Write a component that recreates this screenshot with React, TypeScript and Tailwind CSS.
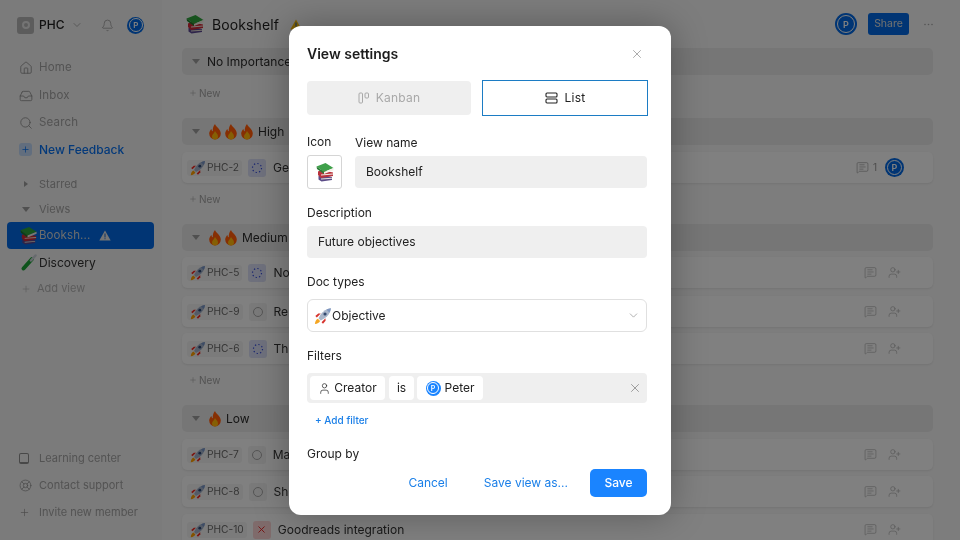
import { Bell, ChevronDown, Home, Inbox, LifeBuoy, MessageSquareText, Plus, Search, UserPlus, User, X } from 'lucide-react';

// Emoji drawings, no colour emoji font to rely on
function Books({ size = 20 }: { size?: number }) {
  return (
    <svg width={size} height={size} viewBox="0 0 20 20" className="shrink-0">
      {/* bottom book */}
      <path d="M3.500 14 5 12.500l12 2.500v3L6.500 19.500 3.500 17.500z" fill="#5a4a86" />
      <path d="M6 16.500 17 15.800v.9L6 17.500z" fill="#e6e0d6" />
      {/* middle book */}
      <path d="M3 9.500 6 8l12 2.500v3.500L6 16 3 13z" fill="#b8323c" />
      <path d="M6 12.500 18 11.500v1L6 13.500z" fill="#f0ebe2" />
      {/* top book */}
      <path d="M1.500 4.500 10.500 1 18.500 6 9 10z" fill="#3fa04a" />
      <path d="M1.500 4.500 9 10v2L2 7z" fill="#2a7a35" />
      <path d="M9 10 18.500 6v2.200L9 12z" fill="#f4f1ea" />
    </svg>
  );
}

function Rocket({ size = 16 }: { size?: number }) {
  return (
    <svg width={size} height={size} viewBox="0 0 16 16" className="shrink-0">
      <path d="M.8 15.200c.2-2.500 1-3.900 2.600-4.700l2 2c-.8 1.600-2.200 2.500-4.600 2.700z" fill="#f5a623" />
      <path d="M2.500 9.300 6 5.800 3.800 5.700 1.200 8z" fill="#d6322c" />
      <path d="M6.700 13.500 10.200 10l.1 2.200L8 14.800z" fill="#d6322c" />
      <path d="M4 10 6 6.500C8 3.500 11 1.500 15 1c-.5 4-2.500 7-5.500 9L6 12z" fill="#a9b5c9" />
      <path d="M15 1c-1.500.2-2.800.6-4 1.200L13.800 5c.6-1.200 1-2.500 1.200-4z" fill="#7f97c0" />
      <circle cx="9.800" cy="6.200" r="1.400" fill="#33496e" />
    </svg>
  );
}

function Fire() {
  return (
    <svg width="14" height="16" viewBox="0 0 14 16" className="shrink-0">
      <path d="M7 0c.6 2.600 5.800 5 5.800 9.600A5.800 6 0 0 1 1.200 9.600C1.200 7.500 2.400 6 3.500 5c0 1.300.5 2 1.300 2.300C4.500 4.500 5.500 2 7 0z" fill="#f0641e" />
      <path d="M7 7c.4 1.500 3 2.800 3 5.200a3 3.200 0 0 1-6 0C4 10.500 6 9.500 7 7z" fill="#fbbf2e" />
    </svg>
  );
}

function TestTube() {
  return (
    <svg width="18" height="18" viewBox="0 0 18 18" className="shrink-0">
      <path d="M12 5 3.500 14.500" stroke="#2f9e44" strokeWidth="4" strokeLinecap="round" />
      <path d="M15.500 1.500 11 6.500" stroke="#cfd4da" strokeWidth="2.500" strokeLinecap="round" />
    </svg>
  );
}

function Warn({ className, color }: { className?: string; color: string }) {
  return (
    <svg width="12" height="11" viewBox="0 0 12 11" className={className}>
      <path d="M6 .5 11.700 10.500H.3z" fill={color} />
      <path d="M5.500 3.500h1v4h-1zM5.500 8.200h1v1h-1z" fill="#1f5fb0" />
    </svg>
  );
}

function Avatar({ size, text, color = '#1468cc' }: { size: number; text: string; color?: string }) {
  return (
    <div
      className="flex shrink-0 items-center justify-center rounded-full"
      style={{ width: size, height: size, backgroundColor: color }}
    >
      <div className="flex h-[80%] w-[80%] items-center justify-center rounded-full border border-white font-semibold leading-none text-white" style={{ fontSize: text }}>
        P
      </div>
    </div>
  );
}

function Caret({ open }: { open: boolean }) {
  return open ? (
    <div className="h-0 w-0 border-x-[4px] border-t-[5px] border-x-transparent border-t-[#a0a0a0]" />
  ) : (
    <div className="h-0 w-0 border-y-[3.5px] border-l-[4px] border-y-transparent border-l-[#a0a0a0]" />
  );
}

function NavItem({ icon, label, className }: { icon: React.ReactNode; label: string; className?: string }) {
  return (
    <div className={`flex h-[27px] items-center pl-[19px] text-[#a6a6a6] ${className ?? ''}`}>
      <span className="flex w-[20px] shrink-0 items-center text-[#909090]">{icon}</span>
      {label}
    </div>
  );
}

function Sidebar() {
  return (
    <aside className="flex h-full w-[162px] shrink-0 flex-col bg-[#f5f5f5]">
      <div className="flex h-[50px] items-center pl-[17px]">
        <div className="flex h-[17px] w-[17px] items-center justify-center rounded-[3px] bg-[#b8b8b8]">
          <div className="h-[8px] w-[8px] rounded-full border-2 border-[#e8e8e8]" />
        </div>
        <span className="ml-[5px] text-[12px] font-medium text-[#222]">PHC</span>
        <ChevronDown size={12} strokeWidth={1.5} className="ml-[7px] text-[#999]" />
        <Bell size={13} strokeWidth={1.4} className="ml-[18px] text-[#999]" />
        <div className="ml-[13px]"><Avatar size={17} text="8px" /></div>
      </div>
      <div className="mt-[4px] flex flex-col">
        <NavItem icon={<Home size={14} strokeWidth={1.4} />} label="Home" className="text-[11.5px] tracking-[0.2px]" />
        <NavItem icon={<Inbox size={14} strokeWidth={1.4} />} label="Inbox" className="mt-[1px] text-[11.5px] tracking-[0.2px]" />
        <NavItem icon={<Search size={14} strokeWidth={1.4} />} label="Search" className="text-[11.5px] tracking-[0.2px]" />
        <div className="flex h-[27px] items-center pl-[19px] text-[12px] font-medium text-[#1a70d8]">
          <span className="mr-[7px] flex h-[13px] w-[13px] items-center justify-center rounded-[3px] bg-[#c8dcf5]">
            <Plus size={9} />
          </span>
          New Feedback
        </div>
      </div>
      <div className="mt-[8px] flex h-[26px] items-center pl-[24px] text-[11px] text-[#a6a6a6]">
        <span className="flex w-[15px]"><Caret open={false} /></span>
        Starred
      </div>
      <div className="flex h-[25px] items-center pl-[22px] text-[11px] text-[#a6a6a6]">
        <span className="flex w-[17px]"><Caret open /></span>
        Views
      </div>
      <div className="ml-[7px] mr-[8px] flex h-[27px] items-center rounded-[4px] bg-[#1468cc] pl-[12px] text-[11.5px] tracking-[0.1px] text-[#d8d8d8]">
        <Books size={19} />
        <span className="ml-[1px]">Booksh...</span>
        <Warn className="ml-[9px]" color="#e8e8e8" />
      </div>
      <div className="flex h-[27px] items-center pl-[20px] text-[12px] text-[#333]">
        <TestTube />
        <span className="ml-[1px]">Discovery</span>
      </div>
      <div className="mt-[1px] flex h-[23px] items-center pl-[21px] text-[11px] text-[#b5b5b5]">
        <Plus size={10} strokeWidth={1.5} className="mr-[6px]" />
        Add view
      </div>
      <div className="mt-auto mb-[14px] flex flex-col text-[11px]">
        <NavItem icon={<div className="h-[11px] w-[10px] rounded-[2px] border border-b-2 border-[#909090]" />} label="Learning center" />
        <NavItem icon={<LifeBuoy size={13} strokeWidth={1.3} />} label="Contact support" />
        <NavItem icon={<Plus size={11} strokeWidth={1.4} />} label="Invite new member" />
      </div>
    </aside>
  );
}

function GroupHead({ fires, label }: { fires: number; label: string }) {
  return (
    <div className="flex h-[27px] shrink-0 items-center rounded-[5px] bg-[#ebebeb] pl-[10px] text-[12px] text-[#2a2a2a]">
      <Caret open />
      <div className="ml-[8px] flex gap-[2px]">
        {Array.from({ length: fires }).map((_, i) => (
          <Fire key={i} />
        ))}
      </div>
      <span className={fires === 0 ? 'ml-[-1px]' : 'ml-[4px]'}>{label}</span>
    </div>
  );
}

function StatusTile({ kind }: { kind: 'progress' | 'todo' | 'cancel' }) {
  if (kind === 'cancel') {
    return (
      <div className="flex h-[18px] w-[18px] shrink-0 items-center justify-center rounded-[3px] bg-[#f8d7d7] text-[#c92a2a]">
        <X size={11} strokeWidth={2} />
      </div>
    );
  }
  if (kind === 'progress') {
    return (
      <div className="flex h-[18px] w-[18px] shrink-0 items-center justify-center rounded-[3px] bg-[#dfe3f5]">
        <svg width="12" height="12" viewBox="0 0 12 12" fill="none" stroke="#3d4fc4" strokeWidth="1.200" strokeDasharray="1.300 2.200">
          <circle cx="6" cy="6" r="4.500" />
        </svg>
      </div>
    );
  }
  return (
    <div className="flex h-[18px] w-[18px] shrink-0 items-center justify-center rounded-[3px] bg-[#f3f3f3]">
      <div className="h-[10px] w-[10px] rounded-full border border-[#aaa]" />
    </div>
  );
}

function Card({ id, status, text, comments, className }: { id: string; status: 'progress' | 'todo' | 'cancel'; text: string; comments?: string; className?: string }) {
  return (
    <div className={`flex h-[31px] shrink-0 items-center rounded-[5px] bg-white pl-[5px] pr-[29px] shadow-[0_1px_2px_rgba(0,0,0,0.08)] ${className ?? ''}`}>
      <div className="flex h-[16px] items-center rounded-[3px] bg-[#f6f6f6] pl-[3px] pr-[3px] text-[10.2px] text-[#6a6a6a]">
        <Rocket />
        <span className="ml-[1px]">{id}</span>
      </div>
      <div className="ml-[6px]"><StatusTile kind={status} /></div>
      <span className="ml-[7px] text-[12px] text-[#333]">{text}</span>
      {comments ? (
        <div className="ml-auto flex items-center text-[10px] text-[#999]">
          <MessageSquareText size={13} strokeWidth={1.2} />
          <span className="ml-[4px] mr-[8px]">{comments}</span>
          <Avatar size={19} text="9px" />
        </div>
      ) : (
        <div className="ml-auto flex items-center gap-[11px] pr-[3px] text-[#aaa]">
          <MessageSquareText size={13} strokeWidth={1.2} />
          <UserPlus size={13} strokeWidth={1.2} />
        </div>
      )}
    </div>
  );
}

function NewRow({ className }: { className: string }) {
  return (
    <div className={`flex h-[16px] shrink-0 items-center pl-[7px] text-[10px] text-[#a6a6a6] ${className}`}>
      <Plus size={8} strokeWidth={1.6} className="mr-[2px]" />
      New
    </div>
  );
}

function Main() {
  return (
    <main className="flex h-full min-w-0 flex-1 flex-col overflow-hidden bg-[#f9f9f9] pl-[20px] pr-[27px]">
      <div className="flex h-[48px] shrink-0 items-center">
        <div className="ml-[3px] flex items-center">
          <Books size={20} />
          <span className="ml-[7px] text-[14px] tracking-[0.1px] text-[#1e1e1e]">Bookshelf</span>
          <Warn className="ml-[11px]" color="#f5c22e" />
        </div>
        <div className="ml-auto flex items-center">
          <Avatar size={22} text="9px" />
          <div className="ml-[11px] flex h-[22px] w-[41px] items-center justify-center rounded-[3px] bg-[#1468cc] text-[10.500px] text-[#e0e0e0]">Share</div>
          <svg width="9" height="3" viewBox="0 0 9 3" fill="#a8a8a8" className="ml-[15px]">
            <circle cx="1" cy="1.500" r="0.800" />
            <circle cx="4.500" cy="1.500" r="0.800" />
            <circle cx="8" cy="1.500" r="0.800" />
          </svg>
        </div>
      </div>
      <GroupHead fires={0} label="No Importance" />
      <NewRow className="mt-[10px] mb-[17px]" />
      <GroupHead fires={3} label="High" />
      <Card id="PHC-2" status="progress" text="Ge" comments="1" className="mt-[7px]" />
      <NewRow className="mt-[8px] mb-[17px]" />
      <GroupHead fires={2} label="Medium" />
      <Card id="PHC-5" status="progress" text="No" className="mt-[6px]" />
      <Card id="PHC-9" status="todo" text="Re" className="mt-[8px]" />
      <Card id="PHC-6" status="progress" text="Th" className="mt-[6px]" />
      <NewRow className="mt-[8px] mb-[17px]" />
      <GroupHead fires={1} label="Low" />
      <Card id="PHC-7" status="todo" text="Ma" className="mt-[7px]" />
      <Card id="PHC-8" status="todo" text="Sh" className="mt-[6px]" />
      <Card id="PHC-10" status="cancel" text="Goodreads integration" className="mt-[7px]" />
    </main>
  );
}

function Modal() {
  return (
    <div className="mt-[26px] flex h-[489px] w-[382px] flex-col overflow-hidden rounded-[12px] bg-white text-[12px] text-[#222] shadow-[0_0_36px_rgba(0,0,0,0.3)]">
      <div className="flex min-h-0 flex-1 flex-col overflow-hidden pl-[18px] pr-[24px]">
        <div className="flex h-[54px] shrink-0 items-center justify-between pt-[1px]">
          <h2 className="text-[14px] font-semibold text-[#1c1c1c]">View settings</h2>
          <X size={14} strokeWidth={1.4} className="mr-[3px] text-[#9a9a9a]" />
        </div>

        <div className="flex shrink-0 items-center tracking-[0.2px]">
          <div className="flex h-[34px] w-[164px] shrink-0 items-center justify-center rounded-[4px] bg-[#efefef] text-[#a8a8a8]">
            <svg width="12" height="12" viewBox="0 0 12 12" fill="none" stroke="currentColor" strokeWidth="1" className="mr-[6px]">
              <rect x="1" y="1" width="3.500" height="10" rx="1" />
              <rect x="7" y="1" width="3.500" height="5" rx="1" />
            </svg>
            Kanban
          </div>
          <div className="ml-[11px] flex h-[36px] w-[166px] shrink-0 items-center justify-center border-[1.5px] border-[#1c7cc4] text-[#222]">
            <svg width="13" height="12" viewBox="0 0 13 12" fill="none" stroke="currentColor" strokeWidth="1.100" className="mr-[7px]">
              <rect x="1" y="1" width="11" height="4" rx="1" />
              <rect x="1" y="7" width="11" height="4" rx="1" />
            </svg>
            List
          </div>
        </div>

        <div className="mt-[18px] flex shrink-0">
          <div className="w-[35px]">
            <div className="h-[16px] leading-[16px]">Icon</div>
            <div className="mt-[5px] flex h-[34px] w-[35px] items-center justify-center rounded-[3px] border border-[#d5d5d5]">
              <Books size={20} />
            </div>
          </div>
          <div className="ml-[13px] flex-1">
            <div className="mt-[1px] h-[16px] leading-[16px]">View name</div>
            <div className="mt-[5px] flex h-[32px] items-center rounded-[4px] bg-[#efefef] pl-[11px]">Bookshelf</div>
          </div>
        </div>

        <div className="mt-[16px] h-[16px] shrink-0 leading-[16px]">Description</div>
        <div className="mt-[5px] flex h-[32px] shrink-0 items-center rounded-[4px] bg-[#efefef] pl-[11px]">Future objectives</div>

        <div className="mt-[16px] h-[16px] shrink-0 leading-[16px]">Doc types</div>
        <div className="mt-[9px] flex h-[33px] shrink-0 items-center rounded-[6px] border border-[#e0e0e0] pl-[6px] pr-[6px]">
          <Rocket size={18} />
          Objective
          <ChevronDown size={13} strokeWidth={1.4} className="ml-auto text-[#999]" />
        </div>

        <div className="mt-[16px] h-[16px] shrink-0 leading-[16px]">Filters</div>
        <div className="mt-[9px] flex h-[30px] shrink-0 items-center rounded-[4px] bg-[#efefef] px-[3px]">
          <div className="flex h-[24px] w-[75px] items-center justify-center rounded-[4px] bg-white">
            <User size={13} strokeWidth={1.3} className="mr-[3px]" />
            Creator
          </div>
          <div className="ml-[4px] flex h-[24px] w-[25px] items-center justify-center rounded-[4px] bg-white">is</div>
          <div className="ml-[3px] flex h-[24px] w-[66px] items-center justify-center rounded-[4px] bg-white">
            <Avatar size={15} text="7px" color="#1a84ff" />
            <span className="ml-[4px]">Peter</span>
          </div>
          <X size={14} strokeWidth={1.4} className="ml-auto mr-[2px] text-[#8a8a8a]" />
        </div>
        <div className="mt-[10px] ml-[8px] h-[14px] shrink-0 text-[10px] font-medium leading-[14px] text-[#1a7fe8]">+ Add filter</div>
        <div className="mt-[19px] h-[16px] shrink-0 leading-[16px]">Group by</div>
      </div>

      <div className="flex h-[46px] shrink-0 items-start justify-end pr-[24px]">
        <div className="flex h-[28px] items-center text-[12px] text-[#1a7fe8]">
          <span>Cancel</span>
          <span className="ml-[36px]">Save view as...</span>
          <div className="ml-[22px] flex h-[28px] w-[57px] items-center justify-center rounded-[5px] bg-[#1a84ff] font-medium text-white">Save</div>
        </div>
      </div>
    </div>
  );
}

export default function App() {
  return (
    <div className="relative flex h-[540px] w-[960px] overflow-hidden font-['Inter',sans-serif]">
      <Sidebar />
      <Main />
      <div className="absolute inset-0 flex items-start justify-center backdrop-brightness-50 backdrop-saturate-[1.25]">
        <Modal />
      </div>
    </div>
  );
}
